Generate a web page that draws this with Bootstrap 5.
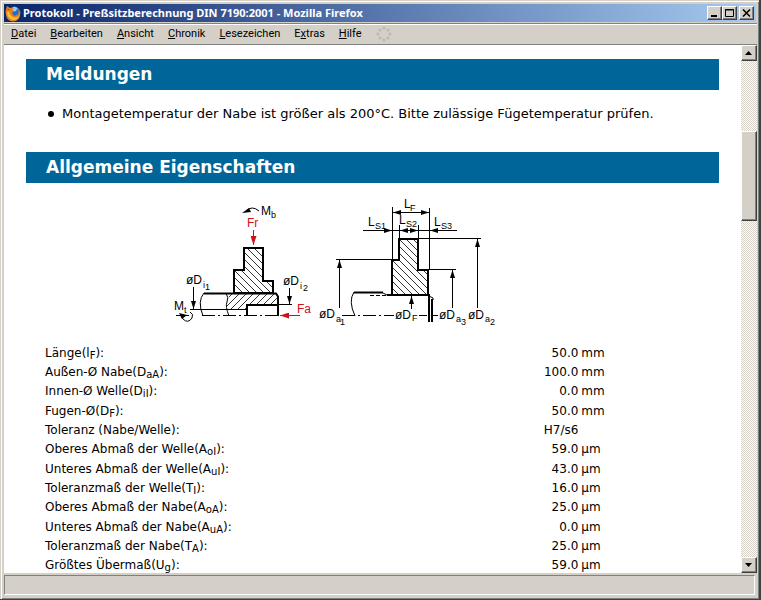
<!DOCTYPE html>
<html lang="de">
<head>
<meta charset="utf-8">
<meta name="viewport" content="width=device-width, initial-scale=1">
<title>Protokoll - Preßsitzberechnung DIN 7190:2001</title>
<link href="https://cdn.jsdelivr.net/npm/bootstrap@5.3.0/dist/css/bootstrap.min.css" rel="stylesheet">
<style>
body { font-family: Verdana, "DejaVu Sans", sans-serif; font-size: 12px; line-height: 16px; color: #000; }
.win { background: #d4d0c8; padding: 4px 2px 4px 4px; border: 0 solid #404040; border-width: 0 2px 1px 0; box-shadow: inset 1px 1px #d4d0c8, inset 2px 2px #fff, inset -1px -1px #808080; }
.ui { font-family: Tahoma, "Noto Sans", "DejaVu Sans", sans-serif; font-size: 11px; line-height: 14px; }
.titlebar { height: 18px; margin-right: 1px; background: linear-gradient(90deg, #0a246a, #a6caf0); padding: 0 2px 0 1px; }
.titlebar h1 { font-size: 11px; line-height: 14px; font-weight: 700; margin-left: 1px; }
.bevel { background: #d4d0c8; border: 1px solid; border-color: #fff #404040 #404040 #fff; box-shadow: inset -1px -1px #808080; padding: 0; }
.winbtn { width: 15px; height: 14px; }
.winbtn-close { margin-left: 2px; }
.menubar { height: 22px; margin-top: 1px; border: 0 solid #808080; border-width: 1px 0; box-shadow: inset 0 1px #fff; padding: 0 7px; gap: 14px; font-family: Tahoma, Roboto, sans-serif; }
.menubar a { color: #000; text-decoration: none; }
.view { background: #fff; }
.doc { padding: 14px 22px 0; }
.section-bar { background: #069; color: #fff; font-size: 17px; line-height: 31px; font-weight: 700; padding: 0 20px; margin: 0; }
.messages { padding: 16px 0 0 22px; margin: 0 0 30px; font-size: 13px; }
.messages li::before { content: ""; flex: none; width: 6px; height: 6px; border-radius: 50%; background: #000; }
.messages li { gap: 8px; }
.drawing { margin: 14px 0 14px; }
.props { margin: 0 0 0 19px; height: 232px; width: 81%; }
.props th, .props td { padding: 0; font-weight: 400; line-height: 18px; white-space: nowrap; vertical-align: middle; }
.props td:nth-child(3) { width: 28px; padding-left: 3px; }
.props sub { font-size: 10px; bottom: -2px; }
.scroll { width: 16px; background: repeating-conic-gradient(#fff 0 25%, #d4d0c8 0 50%) 0 0 / 2px 2px; }
.scroll button { height: 16px; }
.thumb { height: 90px; margin-top: 70px; }
.status { height: 20px; margin: 2px 2px 0 0; border: 1px solid; border-color: #808080 #fff #fff #808080; }
svg text { font-family: "Liberation Sans", Arial, sans-serif; font-size: 12px; }
svg .s { font-size: 9px; }
</style>
<script src="https://cdn.jsdelivr.net/npm/bootstrap@5.3.0/dist/js/bootstrap.bundle.min.js"></script>
</head>
<body>
<div class="win vh-100 d-flex flex-column overflow-hidden">
  <header class="titlebar ui d-flex align-items-center text-white flex-shrink-0">
    <svg width="17" height="17" viewBox="0 0 17 17" aria-hidden="true">
      <circle cx="9" cy="8" r="6.5" fill="#2b6cc0"/>
      <path d="M8 2q3-1 5 2-2 0-2 2-2 1-4-1z" fill="#8fd0f0"/>
      <path d="M1 4 2 1l3 2 4 0-2 2 2 1-2 2q1 4 5 2 3-2 1-6 3 2 2 6-1 6-7 6.500Q2 16 1 10 0 7 1 4z" fill="#e8811c"/>
      <path d="M2 7q0 6 6 8 5 0 7-5-3 4-7 2-4-2-4-6z" fill="#f9c13a"/>
      <path d="M2 2 3 4 5 4 3 6z" fill="#c84a10"/>
    </svg>
    <h1 class="mb-0 me-auto text-nowrap">Protokoll - Preßsitzberechnung DIN 7190:2001 - Mozilla Firefox</h1>
    <button type="button" class="bevel winbtn d-flex" aria-label="Minimieren"><svg width="13" height="12"><path d="M3 9h6" stroke="#000" stroke-width="2"/></svg></button>
    <button type="button" class="bevel winbtn d-flex" aria-label="Maximieren"><svg width="13" height="12"><path d="M2.500 2.500h8v7h-8zM2 3h9" fill="none" stroke="#000"/></svg></button>
    <button type="button" class="bevel winbtn winbtn-close d-flex" aria-label="Schließen"><svg width="13" height="12"><path d="m3 2.500 7 7m0-7-7 7" stroke="#000" stroke-width="1.600"/></svg></button>
  </header>
  <nav class="menubar ui d-flex align-items-center flex-shrink-0">
    <a href="#"><u>D</u>atei</a><a href="#"><u>B</u>earbeiten</a><a href="#"><u>A</u>nsicht</a><a href="#"><u>C</u>hronik</a><a href="#"><u>L</u>esezeichen</a><a href="#">E<u>x</u>tras</a><a href="#"><u>H</u>ilfe</a>
    <svg width="16" height="16" fill="#bdb9b2" aria-hidden="true"><circle cx="8" cy="2" r="1.600"/><circle cx="12" cy="4" r="1.600"/><circle cx="14" cy="8" r="1.600"/><circle cx="12" cy="12" r="1.600"/><circle cx="8" cy="14" r="1.600"/><circle cx="4" cy="12" r="1.600"/><circle cx="2" cy="8" r="1.600"/><circle cx="4" cy="4" r="1.600"/></svg>
  </nav>
  <div class="view d-flex flex-grow-1 overflow-hidden">
    <main class="doc flex-grow-1 overflow-hidden">
      <h2 class="section-bar">Meldungen</h2>
      <ul class="messages list-unstyled"><li class="d-flex align-items-center">Montagetemperatur der Nabe ist größer als 200°C. Bitte zulässige Fügetemperatur prüfen.</li></ul>
      <h2 class="section-bar">Allgemeine Eigenschaften</h2>
      <svg class="drawing d-block mx-auto" width="400" height="132" viewBox="173 196 400 132" role="img" aria-label="Maßskizze von Welle und Nabe">
        <defs>
          <pattern id="hb" width="7" height="7" patternUnits="userSpaceOnUse"><path d="M-1-1 8 8M-1 6 1 8M6-1 8 1" stroke="#000" stroke-width=".8"/></pattern>
          <pattern id="hf" width="7" height="7" patternUnits="userSpaceOnUse"><path d="M-1 8 8-1M-1 1 1-1M6 8 8 6" stroke="#000" stroke-width=".8"/></pattern>
          <marker id="ar" viewBox="0 0 8 6" markerWidth="8" markerHeight="6" markerUnits="userSpaceOnUse" refX="8" refY="3" orient="auto-start-reverse"><path d="M0 .5v5L8 3z"/></marker>
          <marker id="rd" viewBox="0 0 9 6" markerWidth="9" markerHeight="6" markerUnits="userSpaceOnUse" refX="9" refY="3" orient="auto"><path d="M0 0v6l9-3z" fill="#d0101c"/></marker>
        </defs>
        <g stroke="#000" stroke-width="2">
          <path d="M244 247h19v33h10v12h-39v-23h10z" fill="url(#hb)"/>
          <path d="M399 238h19v31h10v25h-36v-35h7z" fill="url(#hb)"/>
        </g>
        <path d="M226 292h50l1.500 2v9.500H247v5H228q-3-4 0-8t-2-8z" fill="url(#hf)"/>
        <g fill="none" stroke="#000">
          <path d="M204 292.500h72l2 3V315M247 315v-11h30M387 294h43" stroke-width="2"/>
          <path d="M190 308.500h57M278 303.500h14M204 292q-7 8-1 23M226 292q3 5 1 9t2 14"/>
          <path d="M176 314.500h14m12 0h76M342 314.500h52" stroke-dasharray="13 3 2 3"/>
          <path d="M190 311q4 2 2 6-4 6-9 1l-2-3M246 210q6-6 13 0"/>
          <path d="M354 291.500h29" stroke-width="2"/>
          <path d="M383 292l4 2M354 291q-6 9 1 24"/>
          <path d="M370 294.500h16" stroke-dasharray="4 2"/>
          <path d="M429 295v26m3-23v23" stroke-width="2"/><path d="M429 295l4 2v2"/>
          <path d="M392.500 206v54M429.500 207v62M399.500 224v14M418.500 224v14M363 229.500h94M336 258.500h56M429 268.500h27M418 237.500h63M419 314.500h8m5 0h6"/>
          <path d="M393 211.500h36" marker-start="url(#ar)" marker-end="url(#ar)"/>
          <path d="M400 229.500h18" marker-start="url(#ar)" marker-end="url(#ar)"/>
          <path d="M375 229.500h17" marker-end="url(#ar)"/><path d="M450 229.500h-20" marker-end="url(#ar)"/>
          <path d="M193.500 286v22" marker-end="url(#ar)"/><path d="M289.500 287v16" marker-end="url(#ar)"/>
          <path d="M339.500 307v-48" marker-end="url(#ar)"/><path d="M452.500 307v-38" marker-end="url(#ar)"/>
          <path d="M477.500 307v-69" marker-end="url(#ar)"/><path d="M411.500 308v-13" marker-end="url(#ar)"/>
          <path d="M253.500 229v15" stroke="#d0101c" marker-end="url(#rd)"/>
          <path d="M300 314.500h-20" stroke="#d0101c" marker-end="url(#rd)"/>
        </g>
        <path d="m242 212 7-5 2 4zM179 312l8 2-5 4z"/>
        <text x="261" y="214">M</text><text class="s" x="271" y="217">b</text>
        <text x="247" y="226" fill="#d0101c">Fr</text><text x="297" y="312" fill="#d0101c">Fa</text>
        <text x="174" y="309">M</text><text class="s" x="184" y="312">t</text>
        <text x="186" y="283">øD</text><text class="s" x="203" y="287">i</text><text class="s" x="205" y="289">1</text>
        <text x="283" y="284">øD</text><text class="s" x="300" y="288">i</text><text class="s" x="303" y="290">2</text>
        <text x="404" y="207">L</text><text class="s" x="410" y="210">F</text>
        <text x="368" y="225">L</text><text class="s" x="375" y="228">S1</text>
        <text x="399" y="223">L</text><text class="s" x="406" y="226">S2</text>
        <text x="434" y="225">L</text><text class="s" x="441" y="228">S3</text>
        <text x="319" y="317">øD</text><text class="s" x="336" y="321">a</text><text class="s" x="340" y="324">1</text>
        <text x="395" y="318">øD</text><text class="s" x="412" y="320">F</text>
        <text x="439" y="318">øD</text><text class="s" x="456" y="321">a</text><text class="s" x="461" y="324">3</text>
        <text x="468" y="318">øD</text><text class="s" x="485" y="321">a</text><text class="s" x="490" y="324">2</text>
      </svg>
      <table class="props">
        <tbody>
          <tr><th scope="row">Länge(l<sub>F</sub>):</th><td class="text-end">50.0</td><td>mm</td></tr>
          <tr><th scope="row">Außen-Ø Nabe(D<sub>aA</sub>):</th><td class="text-end">100.0</td><td>mm</td></tr>
          <tr><th scope="row">Innen-Ø Welle(D<sub>iI</sub>):</th><td class="text-end">0.0</td><td>mm</td></tr>
          <tr><th scope="row">Fugen-Ø(D<sub>F</sub>):</th><td class="text-end">50.0</td><td>mm</td></tr>
          <tr><th scope="row">Toleranz (Nabe/Welle):</th><td class="text-end">H7/s6</td><td></td></tr>
          <tr><th scope="row">Oberes Abmaß der Welle(A<sub>oI</sub>):</th><td class="text-end">59.0</td><td>µm</td></tr>
          <tr><th scope="row">Unteres Abmaß der Welle(A<sub>uI</sub>):</th><td class="text-end">43.0</td><td>µm</td></tr>
          <tr><th scope="row">Toleranzmaß der Welle(T<sub>I</sub>):</th><td class="text-end">16.0</td><td>µm</td></tr>
          <tr><th scope="row">Oberes Abmaß der Nabe(A<sub>oA</sub>):</th><td class="text-end">25.0</td><td>µm</td></tr>
          <tr><th scope="row">Unteres Abmaß der Nabe(A<sub>uA</sub>):</th><td class="text-end">0.0</td><td>µm</td></tr>
          <tr><th scope="row">Toleranzmaß der Nabe(T<sub>A</sub>):</th><td class="text-end">25.0</td><td>µm</td></tr>
          <tr><th scope="row">Größtes Übermaß(U<sub>g</sub>):</th><td class="text-end">59.0</td><td>µm</td></tr>
        </tbody>
      </table>
    </main>
    <div class="scroll d-flex flex-column flex-shrink-0">
      <button type="button" class="bevel d-flex" aria-label="Nach oben"><svg width="14" height="14"><path d="M3 9h7L6.500 5z"/></svg></button>
      <div class="thumb bevel"></div>
      <button type="button" class="bevel d-flex mt-auto" aria-label="Nach unten"><svg width="14" height="14"><path d="M3 5h7L6.500 9z"/></svg></button>
    </div>
  </div>
  <footer class="status flex-shrink-0"></footer>
</div>
</body>
</html>
